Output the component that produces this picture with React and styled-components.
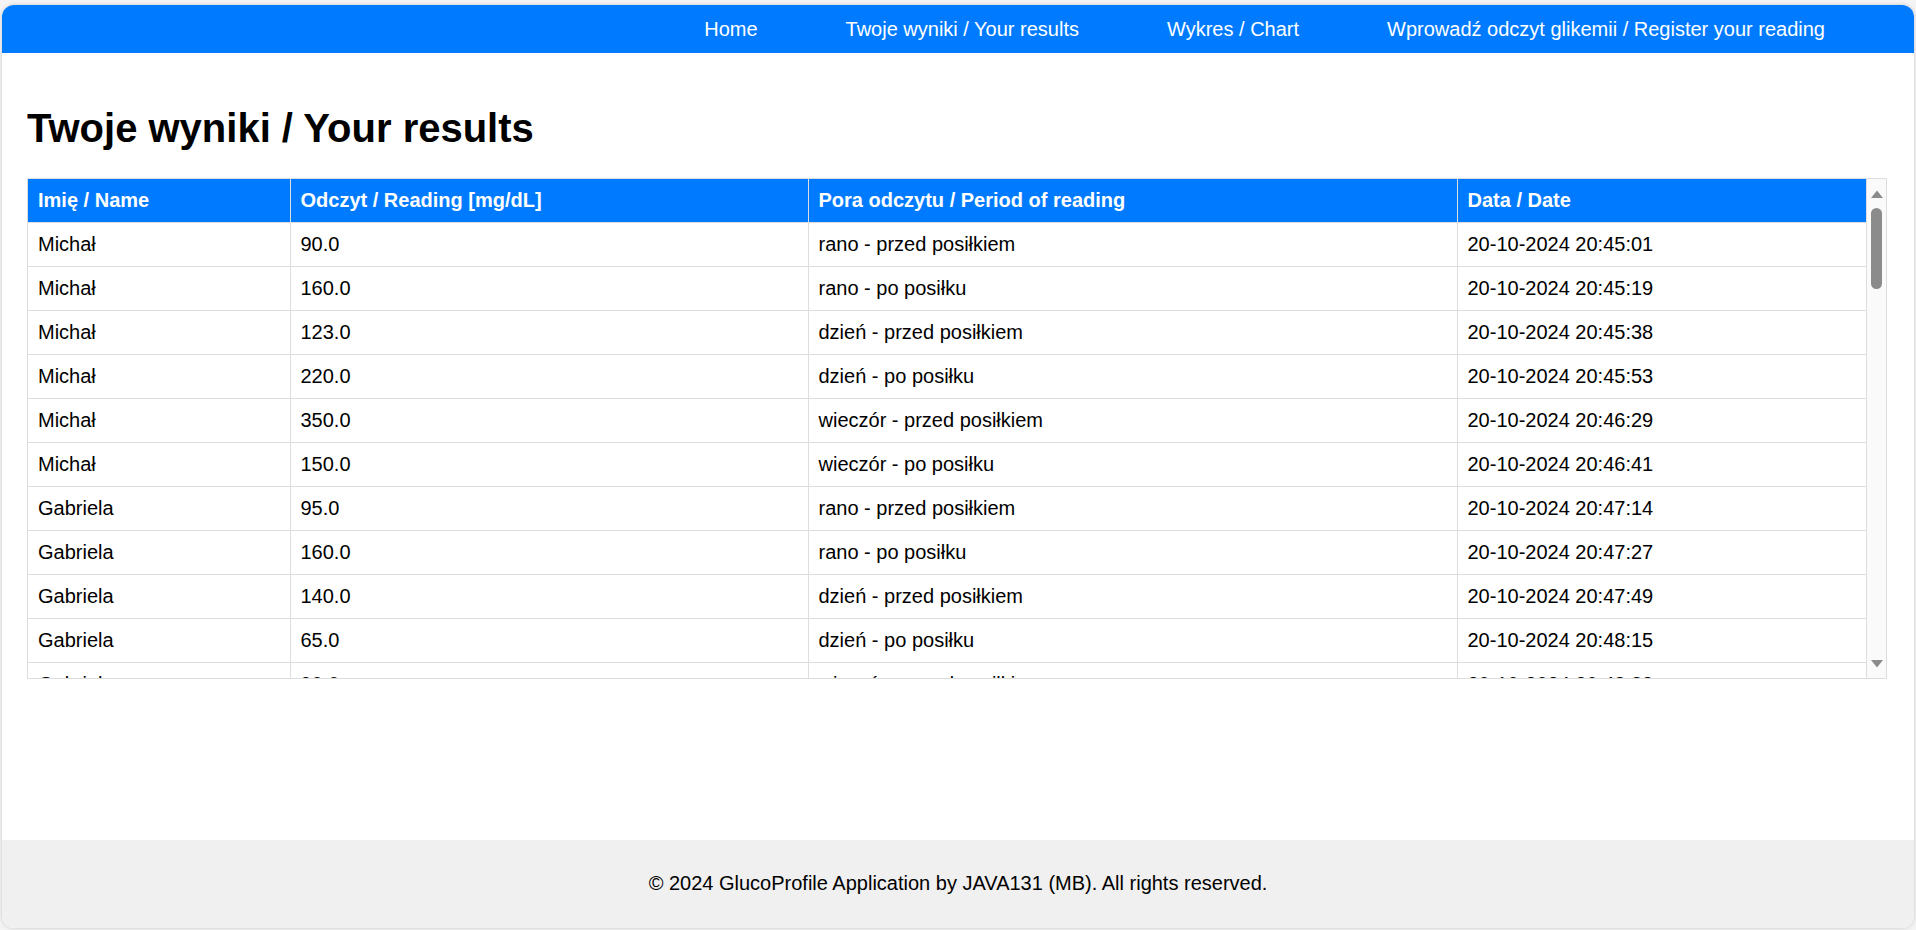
import React from "react";
import styled, { createGlobalStyle } from "styled-components";

const GlobalStyle = createGlobalStyle`
  html, body {
    margin: 0;
    padding: 0;
    background: #f4f4f4;
    font-family: "Liberation Sans", Arial, sans-serif;
    color: #000;
  }
  * { box-sizing: border-box; }
`;

const Page = styled.div`
  margin: 5px 2px 2px 2px;
  height: calc(100vh - 7px);
  background: #fff;
  border-radius: 12px;
  box-shadow: 0 0 4px rgba(0, 0, 0, 0.18);
  overflow: hidden;
  display: flex;
  flex-direction: column;
`;

const Nav = styled.nav`
  height: 48px;
  flex: none;
  background: #007bff;
  display: flex;
  align-items: center;
  justify-content: flex-end;
  gap: 88px;
  padding-right: 89px;
`;

const NavLink = styled.a`
  color: #fff;
  font-size: 20px;
  line-height: 23px;
  text-decoration: none;
  white-space: nowrap;
  cursor: pointer;
`;

const Main = styled.main`
  flex: 1;
  padding: 25px 27px 25px 25px;
`;

const Title = styled.h1`
  font-size: 40px;
  line-height: 46px;
  font-weight: bold;
  margin: 27px 0 27px 0;
`;

const TableWrap = styled.div`
  border: 1px solid #ddd;
  height: 501px;
  display: flex;
  overflow: hidden;
`;

const ScrollArea = styled.div`
  flex: 1;
  min-width: 0;
  overflow: hidden;
`;

const ScrollBar = styled.div`
  flex: none;
  width: 19px;
  background: #fafafa;
  display: flex;
  flex-direction: column;
  align-items: center;
  padding: 11px 0 10px 0;
`;

const Thumb = styled.div`
  width: 11px;
  height: 81px;
  margin-top: 10px;
  border-radius: 6px;
  background: #8b8b8b;
`;

const Spacer = styled.div`
  flex: 1;
`;

const Arrow = ({ down }) => (
  <svg width="12" height="8" viewBox="0 0 12 8" style={{ display: "block" }}>
    <polygon points={down ? "0,0 12,0 6,7.5" : "6,0.5 12,8 0,8"} fill="#8b8b8b" />
  </svg>
);

const Table = styled.table`
  width: 100%;
  border-collapse: collapse;
  table-layout: fixed;
  font-size: 20px;
`;

const Col = styled.col`
  width: ${(p) => (p.$w ? `${p.$w}px` : "auto")};
`;

const Th = styled.th`
  background: #007bff;
  color: #fff;
  font-weight: bold;
  text-align: left;
  padding: 10px;
  line-height: 23px;
  border: 1px solid #ddd;
  border-top: none;
  white-space: nowrap;
  &:first-child { border-left: none; }
`;

const Td = styled.td`
  padding: 10px;
  line-height: 23px;
  border: 1px solid #ddd;
  white-space: nowrap;
  &:first-child { border-left: none; }
`;

const Footer = styled.footer`
  flex: none;
  height: 88px;
  background: #f0f0f0;
  display: flex;
  align-items: center;
  justify-content: center;
  font-size: 20px;
  line-height: 23px;
  padding-bottom: 2px;
`;

const periods = [
  "rano - przed posiłkiem",
  "rano - po posiłku",
  "dzień - przed posiłkiem",
  "dzień - po posiłku",
  "wieczór - przed posiłkiem",
  "wieczór - po posiłku",
];

const rows = [
  ["Michał", "90.0", 0, "20-10-2024 20:45:01"],
  ["Michał", "160.0", 1, "20-10-2024 20:45:19"],
  ["Michał", "123.0", 2, "20-10-2024 20:45:38"],
  ["Michał", "220.0", 3, "20-10-2024 20:45:53"],
  ["Michał", "350.0", 4, "20-10-2024 20:46:29"],
  ["Michał", "150.0", 5, "20-10-2024 20:46:41"],
  ["Gabriela", "95.0", 0, "20-10-2024 20:47:14"],
  ["Gabriela", "160.0", 1, "20-10-2024 20:47:27"],
  ["Gabriela", "140.0", 2, "20-10-2024 20:47:49"],
  ["Gabriela", "65.0", 3, "20-10-2024 20:48:15"],
  ["Gabriela", "90.0", 4, "20-10-2024 20:48:33"],
];

const links = [
  "Home",
  "Twoje wyniki / Your results",
  "Wykres / Chart",
  "Wprowadź odczyt glikemii / Register your reading",
];

export default function App() {
  return (
    <>
      <GlobalStyle />
      <Page>
        <Nav>
          {links.map((l) => (
            <NavLink key={l}>{l}</NavLink>
          ))}
        </Nav>
        <Main>
          <Title>Twoje wyniki / Your results</Title>
          <TableWrap>
            <ScrollArea>
              <Table>
                <colgroup>
                  <Col $w={262} />
                  <Col $w={518} />
                  <Col $w={649} />
                  <Col />
                </colgroup>
                <thead>
                  <tr>
                    <Th>Imię / Name</Th>
                    <Th>Odczyt / Reading [mg/dL]</Th>
                    <Th>Pora odczytu / Period of reading</Th>
                    <Th>Data / Date</Th>
                  </tr>
                </thead>
                <tbody>
                  {rows.map((r, i) => (
                    <tr key={i}>
                      <Td>{r[0]}</Td>
                      <Td>{r[1]}</Td>
                      <Td>{periods[r[2]]}</Td>
                      <Td>{r[3]}</Td>
                    </tr>
                  ))}
                </tbody>
              </Table>
            </ScrollArea>
            <ScrollBar>
              <Arrow />
              <Thumb />
              <Spacer />
              <Arrow down />
            </ScrollBar>
          </TableWrap>
        </Main>
        <Footer>© 2024 GlucoProfile Application by JAVA131 (MB). All rights reserved.</Footer>
      </Page>
    </>
  );
}
